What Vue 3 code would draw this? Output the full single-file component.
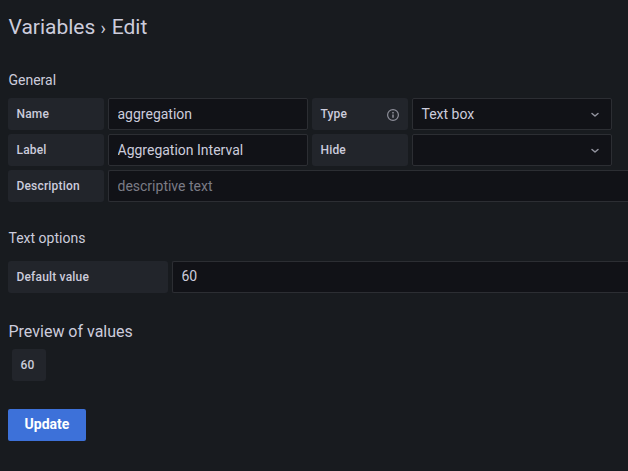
<script setup>
import { ref } from 'vue'

const name = ref('aggregation')
const label = ref('Aggregation Interval')
const description = ref('')
const defaultValue = ref('60')
const type = ref('Text box')
const hide = ref('')
const preview = ['60']
</script>

<template>
  <main class="page">
    <h3 class="title">Variables <span class="separator">›</span> Edit</h3>

    <form class="form" @submit.prevent>
      <h5 class="section general">General</h5>
      <div class="rows">
        <div class="row">
          <label class="label">Name</label>
          <input v-model="name" class="input fixed" />
          <label class="label">
            Type
            <svg class="info" viewBox="0 0 14 14" width="14" height="14">
              <circle cx="7" cy="7" r="5.4" fill="none" stroke="currentColor" stroke-width="1.2" />
              <path d="M7 6.4v3.4M7 4v1.4" stroke="currentColor" stroke-width="1.5" />
            </svg>
          </label>
          <div class="input select fixed">
            <span>{{ type }}</span>
            <svg class="chevron" viewBox="0 0 16 16" width="16" height="16">
              <path d="M5 7.5l3 2.5 3-2.5" />
            </svg>
          </div>
        </div>
        <div class="row">
          <label class="label">Label</label>
          <input v-model="label" class="input fixed" />
          <label class="label">Hide</label>
          <div class="input select fixed">
            <span>{{ hide }}</span>
            <svg class="chevron" viewBox="0 0 16 16" width="16" height="16">
              <path d="M5 7.5l3 2.5 3-2.5" />
            </svg>
          </div>
        </div>
        <div class="row">
          <label class="label">Description</label>
          <input v-model="description" class="input wide" placeholder="descriptive text" />
        </div>
      </div>

      <h5 class="section options">Text options</h5>
      <div class="row">
        <label class="label long">Default value</label>
        <input v-model="defaultValue" class="input wide default" />
      </div>

      <h5 class="preview-title">Preview of values</h5>
      <div class="chips">
        <span v-for="value in preview" :key="value" class="label chip">{{ value }}</span>
      </div>

      <button class="update" type="submit">Update</button>
    </form>
  </main>
</template>

<style>
body {
  background: #181b1f;
  overflow: hidden;
}
</style>

<style scoped>
.page {
  box-sizing: border-box;
  height: 471px;
  padding: 13px 0 0 8px;
  overflow: hidden;
  background: #181b1f;
  color: #ccccdc;
  font-family: Roboto, "Liberation Sans", sans-serif;
  font-size: 14px;
}
.title {
  margin: 0;
  padding-left: 0.5px;
  font-size: 21px;
  line-height: 28px;
  font-weight: 400;
}
.separator {
  display: inline-block;
  width: 6px;
  font-size: 18px;
  line-height: 20px;
}
.section {
  margin: 0;
  padding-left: 0.5px;
  font-size: 14px;
  line-height: 20px;
  font-weight: 400;
}
.general {
  margin-top: 29px;
  margin-bottom: 8px;
}
.options {
  margin-top: 26px;
  margin-bottom: 13px;
}
.rows {
  display: flex;
  flex-direction: column;
  gap: 4px;
}
.row {
  display: flex;
  gap: 4px;
}
.label {
  box-sizing: border-box;
  display: flex;
  align-items: center;
  justify-content: space-between;
  flex: none;
  width: 96px;
  height: 32px;
  padding: 0 8px 0 8.5px;
  border-radius: 3px;
  background: #22252b;
  font-size: 12px;
  font-weight: 500;
  letter-spacing: 0.18px;
}
.long {
  width: 160px;
}
.info {
  position: relative;
  top: 1px;
  color: #8e8f9a;
}
.input {
  box-sizing: border-box;
  height: 32px;
  padding: 0 8.5px;
  border: 1px solid #2c2e33;
  border-radius: 2px;
  outline: none;
  background: #111217;
  color: #ccccdc;
  font: 400 14px Roboto, "Liberation Sans", sans-serif;
}
.input::placeholder {
  color: #7b7c86;
  opacity: 1;
}
.fixed {
  flex: none;
  width: 200px;
}
.wide {
  flex: 1;
  min-width: 0;
  border-right: 0;
  border-radius: 2px 0 0 2px;
}
.default {
  padding-bottom: 2px;
}
.select {
  display: flex;
  align-items: center;
  justify-content: space-between;
  padding-right: 8px;
}
.chevron {
  fill: none;
  stroke: #93949f;
  stroke-width: 1.5;
  stroke-linecap: round;
  stroke-linejoin: round;
}
.preview-title {
  margin: 28px 0 6px;
  padding-left: 0.5px;
  font-size: 16px;
  line-height: 22px;
  font-weight: 400;
}
.chips {
  display: flex;
  padding-left: 4px;
}
.chip {
  width: 34px;
}
.update {
  display: block;
  width: 78px;
  height: 32px;
  margin-top: 28px;
  padding: 0 0 2px;
  border: 0;
  border-radius: 2px;
  background: #3d71d9;
  color: #fff;
  font: 700 14px Roboto, "Liberation Sans", sans-serif;
}
</style>
